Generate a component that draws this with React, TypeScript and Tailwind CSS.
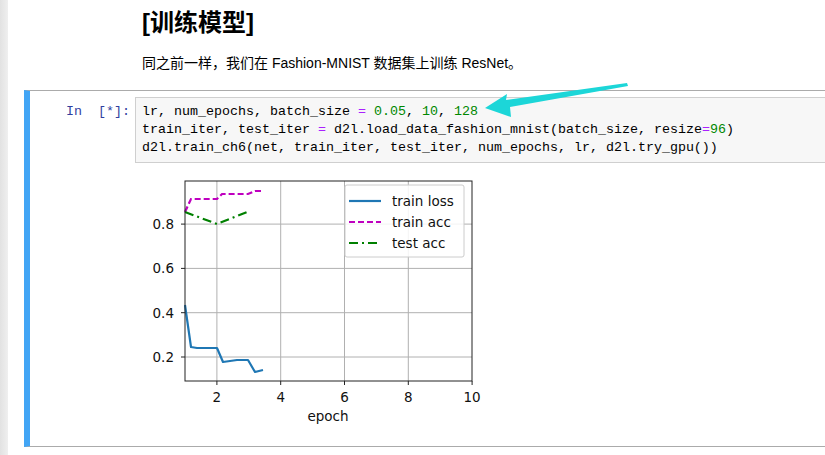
import React from "react";

const X = (v: number) => 185 + (v - 1) * 31.9;
const Y = (v: number) => 357 - (v - 0.2) * 221.5;

function Chart() {
  const loss = "185,305 191,347 197,348 217,348 223,362 237,360 248,360 255,372 263,370";
  const tacc = "185,212 191,199 217,199 222,194 248,194 255,191 263,191";
  const teacc = "185,212 217,224 247,212";
  const xt = [2, 4, 6, 8, 10];
  const yt = [0.2, 0.4, 0.6, 0.8];
  return (
    <svg width="350" height="270" viewBox="135 170 350 270" className="block" style={{ fontFamily: "'DejaVu Sans', sans-serif" }}>
      {xt.slice(0, 4).map((t) => (
        <line key={"gx" + t} x1={X(t)} x2={X(t)} y1={181} y2={381} stroke="#b0b0b0" strokeWidth={1} />
      ))}
      {yt.map((t) => (
        <line key={"gy" + t} x1={185} x2={472} y1={Y(t)} y2={Y(t)} stroke="#b0b0b0" strokeWidth={1} />
      ))}
      <polyline points={loss} fill="none" stroke="#1f77b4" strokeWidth={2.2} strokeLinejoin="round" />
      <polyline points={tacc} fill="none" stroke="#bf00bf" strokeWidth={2.2} strokeDasharray="6,3" />
      <polyline points={teacc} fill="none" stroke="#008000" strokeWidth={2.2} strokeDasharray="9,4,2,4" />
      <rect x={185} y={181} width={287} height={200} fill="none" stroke="#222" strokeWidth={1} />
      {xt.map((t) => (
        <g key={"tx" + t}>
          <line x1={X(t)} x2={X(t)} y1={381} y2={385} stroke="#222" strokeWidth={1} />
          <text x={X(t)} y={402} fontSize="13.5" textAnchor="middle" fill="#111">{t}</text>
        </g>
      ))}
      {yt.map((t) => (
        <g key={"ty" + t}>
          <line x1={181} x2={185} y1={Y(t)} y2={Y(t)} stroke="#222" strokeWidth={1} />
          <text x={174} y={Y(t) + 5} fontSize="13.5" textAnchor="end" fill="#111">{t.toFixed(1)}</text>
        </g>
      ))}
      <text x={328} y={421} fontSize="13.5" textAnchor="middle" fill="#111">epoch</text>
      <rect x={345} y={185} width={119} height={72} rx={2} fill="white" fillOpacity={0.85} stroke="#cccccc" strokeWidth={1} />
      <line x1={349} x2={381} y1={201} y2={201} stroke="#1f77b4" strokeWidth={2.2} />
      <text x={392} y={206} fontSize="13.5" fill="#111">train loss</text>
      <line x1={349} x2={381} y1={222} y2={222} stroke="#bf00bf" strokeWidth={2.2} strokeDasharray="6,3" />
      <text x={392} y={227} fontSize="13.5" fill="#111">train acc</text>
      <line x1={349} x2={381} y1={243} y2={243} stroke="#008000" strokeWidth={2.2} strokeDasharray="9,4,2,4" />
      <text x={392} y={248} fontSize="13.5" fill="#111">test acc</text>
    </svg>
  );
}

export default function App() {
  const mono = { fontFamily: "'Liberation Mono', 'DejaVu Sans Mono', monospace" };
  return (
    <div className="relative w-[825px] h-[455px] overflow-hidden flex bg-white">
      <div className="w-[8px] shrink-0 bg-linear-to-r from-[#e2e2e2] to-[#efefef]" />
      <div className="flex-1 min-w-0 flex flex-col">
        <div className="pl-[134px] pt-[8px]" style={{ fontFamily: "'Liberation Sans', 'Noto Sans CJK SC', sans-serif" }}>
          <div className="text-[24px] leading-[30px] font-bold text-black">[训练模型]</div>
          <p className="mt-[15px] text-[14px] leading-[20px] text-black">
            同之前一样，我们在 Fashion-MNIST 数据集上训练 ResNet。
          </p>
        </div>
        <div className="mt-[17px] ml-[16px] w-[830px] border-t border-b border-[#ababab] border-l-[6px] border-l-[#42a5f5] pb-[6px]">
          <div className="flex mt-[6px]">
            <div
              className="w-[105px] shrink-0 text-right pr-[5px] pt-[6px] text-[13.33px] leading-[18px] text-[#303f9f] whitespace-pre"
              style={mono}
            >
              {"In  [*]:"}
            </div>
            <div
              className="flex-1 border border-[#cfcfcf] bg-[#f7f7f7] py-[5px] pl-[6px] text-[13.33px] leading-[18px] text-black whitespace-pre"
              style={mono}
            >
              <div>
                lr, num_epochs, batch_size <span className="text-[#aa22ff]">=</span>{" "}
                <span className="text-[#008800]">0.05</span>, <span className="text-[#008800]">10</span>,{" "}
                <span className="text-[#008800]">128</span>
              </div>
              <div>
                train_iter, test_iter <span className="text-[#aa22ff]">=</span> d2l.load_data_fashion_mnist(batch_size, resize
                <span className="text-[#aa22ff]">=</span>
                <span className="text-[#008800]">96</span>)
              </div>
              <div>d2l.train_ch6(net, train_iter, test_iter, num_epochs, lr, d2l.try_gpu())</div>
            </div>
          </div>
          <div className="ml-[105px] mt-[7px]">
            <Chart />
          </div>
        </div>
      </div>
      <svg className="absolute left-0 top-0 pointer-events-none" width="825" height="455">
        <polygon points="485,108 507,94 506,100 627,83 628,86 510,107 511,117" fill="#1cd6d8" />
      </svg>
    </div>
  );
}
